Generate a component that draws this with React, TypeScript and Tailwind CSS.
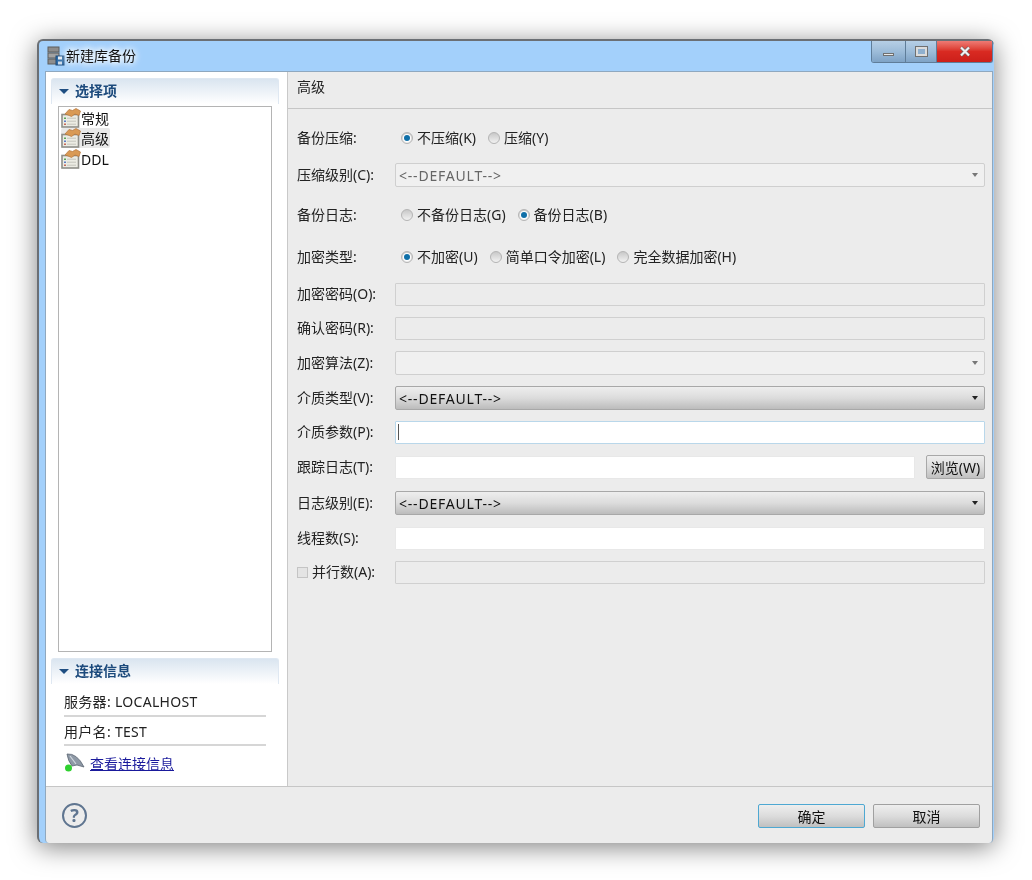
import type { ReactNode } from "react";

const font = "[font-family:'Noto_Sans','Noto_Sans_CJK_SC',sans-serif]";

function DbIcon() {
  return (
    <svg width="18" height="20" viewBox="0 0 18 20">
      <rect x="1" y="1" width="11" height="5" fill="#8d8d8d" stroke="#5c5c5c" />
      <rect x="1" y="7" width="11" height="5" fill="#a3a3a3" stroke="#5c5c5c" />
      <rect x="1" y="13" width="11" height="5" fill="#8d8d8d" stroke="#5c5c5c" />
      <rect x="9" y="10" width="8" height="9" fill="#2f6da8" stroke="#1e4b7a" />
      <rect x="11" y="10.5" width="4" height="3" fill="#e8eef5" />
      <rect x="11" y="15.5" width="4" height="3" fill="#cfdcea" />
    </svg>
  );
}

function PrefIcon() {
  return (
    <svg width="20" height="20" viewBox="0 0 20 20">
      <rect x="1" y="6.5" width="16.5" height="12.5" fill="#ecece4" stroke="#8f8f89" strokeWidth="1.6" />
      <rect x="3" y="9.5" width="2" height="1.5" fill="#5aa55a" />
      <rect x="3" y="12.5" width="2" height="1.5" fill="#5a7fc5" />
      <rect x="3" y="15.5" width="2" height="1.5" fill="#c56a5a" />
      <path d="M6 10.2h9M6 13.2h9M6 16.2h9" stroke="#c4c4bb" strokeWidth="1" />
      <path d="M4 6 L8 1.5 L11.5 2.5 L15 0.5 L19.5 3 L18 7.5 L14 6 L10.5 8.5 L7 7 Z" fill="#d99a55" stroke="#b4743a" strokeWidth="0.7" />
    </svg>
  );
}

function SectionHeader({ children, className }: { children: ReactNode; className?: string }) {
  return (
    <div className={`ml-[5px] mr-[8px] h-[26px] flex items-center rounded-t-[3px] border-t border-x border-[#dfe8f2] bg-gradient-to-b from-[#dae5f0] to-white ${className ?? ""}`}>
      <span className="ml-[7px] w-0 h-0 border-x-[5px] border-x-transparent border-t-[5px] border-t-[#1f4e82]" />
      <span className="ml-[6px] -mt-[2px] text-[14px] font-bold text-[#1c4a7c]">{children}</span>
    </div>
  );
}

function TreeItem({ label, selected }: { label: string; selected?: boolean }) {
  return (
    <div className="h-[20px] flex items-center">
      <div className={`h-[20px] flex items-center pr-[1px] rounded-[2px] ${selected ? "bg-[#e9e9e9]" : ""}`}>
        <PrefIcon />
        <span className="mt-[1px] text-[14px] leading-[20px] text-[#111]">{label}</span>
      </div>
    </div>
  );
}

function Radio({ label, checked, className }: { label: string; checked?: boolean; className?: string }) {
  return (
    <div className={`flex items-center gap-[4px] ${className ?? ""}`}>
      <span className="w-[12px] h-[12px] rounded-full border border-[#b4b4b4] bg-gradient-to-b from-[#c8c8c8] to-[#f2f2f2] flex items-center justify-center">
        {checked && <span className="w-[6px] h-[6px] rounded-full bg-[#0f6fa8] shadow-[0_0_0_1px_#fff]" />}
      </span>
      <span className="-mt-[2px]">{label}</span>
    </div>
  );
}

function Combo({ enabled, value }: { enabled?: boolean; value?: string }) {
  const look = enabled
    ? "border-[#a8a8a8] bg-gradient-to-b from-[#eeeeee] via-[#dcdcdc] to-[#bcbcbc] text-[#111]"
    : "border-[#cfcfcf] bg-[#f0f0f0] text-[#666]";
  return (
    <div className={`flex-1 h-[24px] rounded-[2px] border flex items-center justify-between pl-[3px] pr-[6px] ${look}`}>
      <span className="tracking-[0.8px]">{value}</span>
      <span className={`w-0 h-0 border-x-[3.5px] border-x-transparent border-t-[4px] ${enabled ? "border-t-[#222]" : "border-t-[#777]"}`} />
    </div>
  );
}

function Field({ disabled, focused }: { disabled?: boolean; focused?: boolean }) {
  if (focused) {
    return (
      <div className="flex-1 h-[23px] bg-white border border-[#b9d7ea] rounded-[1px] flex items-center pl-[2px]">
        <span className="w-[1px] h-[16px] bg-[#555]" />
      </div>
    );
  }
  return <div className={`flex-1 h-[23px] rounded-[1px] border ${disabled ? "bg-[#ececec] border-[#d0d0d0]" : "bg-white border-[#e8e8e8]"}`} />;
}

function Row({ label, className, children }: { label: ReactNode; className?: string; children: ReactNode }) {
  return (
    <div className={`h-[24px] flex items-center ${className ?? ""}`}>
      <div className="w-[98px] shrink-0 text-[#222] -mt-[2px]">{label}</div>
      {children}
    </div>
  );
}

export default function App() {
  return (
    <div className={`w-[1032px] h-[880px] bg-white pt-[39px] pl-[37px] overflow-hidden blur-[0.4px] ${font} text-[14px]`}>
      <div className="w-[957px] h-[804px] flex flex-col rounded-[6px] border-l-2 border-t-2 border-[#6b6f74] bg-[#a3d0fb] shadow-[0_4px_26px_rgba(0,0,0,0.5)]">
        {/* title bar */}
        <div className="h-[30px] shrink-0 flex justify-between">
          <div className="pl-[8px] pt-[3px] flex items-center gap-[1px] h-[26px]">
            <DbIcon />
            <span className="text-[14px] text-[#111] [text-shadow:0_0_6px_#fff,0_0_6px_#fff,0_0_10px_#fff]">新建库备份</span>
          </div>
          <div className="flex h-[22px] mr-[1px] rounded-b-[3px] overflow-hidden border border-t-0 border-[#5f7d99]">
            <div className="w-[34px] border-r border-[#5f7d99] bg-gradient-to-b from-[#b6cfe6] via-[#9dbcd9] to-[#7fa3c6] flex items-center justify-center">
              <span className="mt-[5px] w-[11px] h-[3px] bg-[#e8e8e8] border border-[#707070]" />
            </div>
            <div className="w-[31px] border-r border-[#5f7d99] bg-gradient-to-b from-[#b6cfe6] via-[#9dbcd9] to-[#7fa3c6] flex items-center justify-center">
              <span className="w-[11px] h-[9px] bg-[#8fb0cf] border-2 border-[#dcdcdc] outline outline-1 outline-[#707070]" />
            </div>
            <div className="w-[55px] bg-gradient-to-b from-[#ee7a74] via-[#d92a22] to-[#cc1f1a] flex items-center justify-center">
              <svg width="12" height="11" viewBox="0 0 12 11">
                <path d="M2 1.5 L10 9.5 M10 1.5 L2 9.5" stroke="#666" strokeWidth="3.4" />
                <path d="M2 1.5 L10 9.5 M10 1.5 L2 9.5" stroke="#f2f2f2" strokeWidth="2.2" />
              </svg>
            </div>
          </div>
        </div>
        {/* body */}
        <div className="flex-1 ml-[6px] mr-[1px] flex flex-col bg-[#ececec] border border-[#8fa8bf] border-b-0 rounded-b-[4px] min-h-0">
          <div className="h-[715px] flex border-b border-[#c6c6c6] shrink-0">
            <div className="w-[242px] shrink-0 bg-white border-r border-[#c9c9c9] pt-[6px]">
              <SectionHeader>选择项</SectionHeader>
              <div className="ml-[12px] mr-[15px] mt-[2px] h-[546px] border border-[#b4b4b4] bg-white pl-[2px] pt-[1px]">
                <TreeItem label="常规" />
                <TreeItem label="高级" selected />
                <div className="h-[1px]" />
                <TreeItem label="DDL" />
              </div>
              <SectionHeader className="mt-[6px]">连接信息</SectionHeader>
              <div className="ml-[18px] mr-[21px] text-[#222]">
                <div className="h-[33px] pt-[3px] flex items-center border-b-2 border-[#d6d6d6] tracking-[0.3px]">服务器: LOCALHOST</div>
                <div className="h-[29px] pt-[1px] flex items-center border-b-2 border-[#d6d6d6] tracking-[0.3px]">用户名: TEST</div>
                <div className="h-[34px] flex items-center gap-[5px]">
                  <svg width="21" height="20" viewBox="0 0 21 20">
                    <path d="M3 1 Q13 0 20 14 L13 12 L8 13 Q4 8 3 1 Z" fill="#8e99a6" stroke="#5d6773" strokeWidth="0.8" />
                    <path d="M6 3 L12 11" stroke="#d0d7de" strokeWidth="1.2" />
                    <circle cx="4.5" cy="15" r="3.5" fill="#2fd12f" />
                  </svg>
                  <span className="underline text-[#1a1a9c]">查看连接信息</span>
                </div>
              </div>
            </div>
            <div className="flex-1 min-w-0">
              <div className="h-[37px] border-b border-[#c6c6c6] pl-[9px] pb-[7px] flex items-center text-[#222]">高级</div>
              <div className="pl-[9px] pr-[7px]">
                <Row label="备份压缩:" className="mt-[17px]">
                  <div className="flex ml-[6px] text-[#222]">
                    <Radio label="不压缩(K)" checked />
                    <Radio label="压缩(Y)" className="ml-[12px]" />
                  </div>
                </Row>
                <Row label="压缩级别(C):" className="mt-[13px]">
                  <Combo value="<--DEFAULT-->" />
                </Row>
                <Row label="备份日志:" className="mt-[16px]">
                  <div className="flex ml-[6px] text-[#222]">
                    <Radio label="不备份日志(G)" />
                    <Radio label="备份日志(B)" checked className="ml-[12px]" />
                  </div>
                </Row>
                <Row label="加密类型:" className="mt-[18px]">
                  <div className="flex ml-[6px] text-[#222]">
                    <Radio label="不加密(U)" checked />
                    <Radio label="简单口令加密(L)" className="ml-[12px]" />
                    <Radio label="完全数据加密(H)" className="ml-[12px]" />
                  </div>
                </Row>
                <Row label="加密密码(O):" className="mt-[13px]">
                  <Field disabled />
                </Row>
                <Row label="确认密码(R):" className="mt-[10px]">
                  <Field disabled />
                </Row>
                <Row label="加密算法(Z):" className="mt-[11px]">
                  <Combo />
                </Row>
                <Row label="介质类型(V):" className="mt-[11px]">
                  <Combo enabled value="<--DEFAULT-->" />
                </Row>
                <Row label="介质参数(P):" className="mt-[10px]">
                  <Field focused />
                </Row>
                <Row label="跟踪日志(T):" className="mt-[11px]">
                  <Field />
                  <div className="ml-[11px] w-[59px] h-[24px] rounded-[2px] border border-[#a8a8a8] bg-gradient-to-b from-[#eeeeee] via-[#dcdcdc] to-[#c0c0c0] flex items-center justify-center text-[#111] whitespace-nowrap">
                    浏览(W)
                  </div>
                </Row>
                <Row label="日志级别(E):" className="mt-[12px]">
                  <Combo enabled value="<--DEFAULT-->" />
                </Row>
                <Row label="线程数(S):" className="mt-[11px]">
                  <Field />
                </Row>
                <Row
                  className="mt-[10px]"
                  label={
                    <div className="flex items-center gap-[4px]">
                      <span className="mt-[2px] w-[11px] h-[11px] border border-[#c4c4c4] bg-[#e4e4e4]" />
                      <span>并行数(A):</span>
                    </div>
                  }
                >
                  <Field disabled />
                </Row>
              </div>
            </div>
          </div>
          {/* footer */}
          <div className="flex-1 flex items-center justify-between pl-[16px] pr-[12px]">
            <div className="w-[25px] h-[25px] rounded-full border-2 border-[#5f7590] flex items-center justify-center text-[#5f7590] text-[18px] font-bold leading-none">
              ?
            </div>
            <div className="flex gap-[8px] mt-[2px]">
              <div className="w-[107px] h-[24px] rounded-[2px] border border-[#4ea8d2] bg-gradient-to-b from-[#eeeeee] via-[#dcdcdc] to-[#c0c0c0] flex items-center justify-center text-[#111]">
                确定
              </div>
              <div className="w-[107px] h-[24px] rounded-[2px] border border-[#a0a0a0] bg-gradient-to-b from-[#eeeeee] via-[#dcdcdc] to-[#c0c0c0] flex items-center justify-center text-[#111]">
                取消
              </div>
            </div>
          </div>
        </div>
      </div>
    </div>
  );
}
